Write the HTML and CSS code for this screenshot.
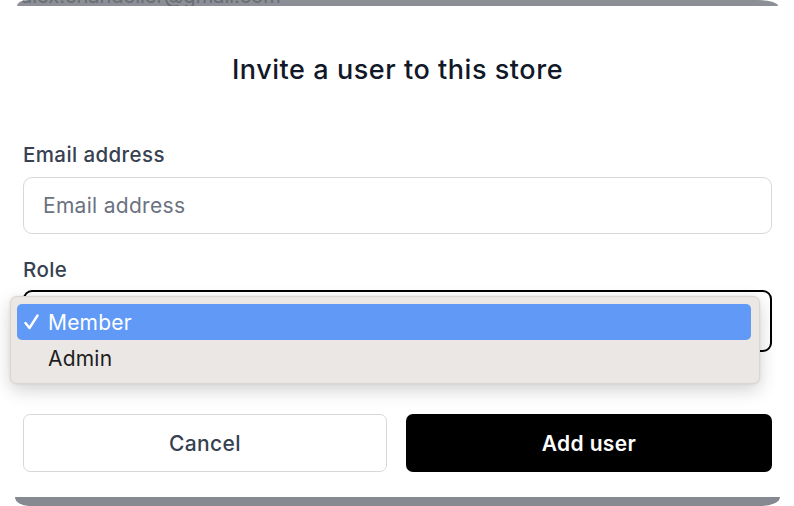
FILE: index.html
```html
<!DOCTYPE html>
<html lang="en">
<head>
<meta charset="utf-8">
<title>Invite a user</title>
<link rel="stylesheet" href="styles.css">
</head>
<body>
  <div class="page-top"><span class="page-email">alex.chandelier@gmail.com</span></div>
  <div class="modal">
    <h1 class="modal-title">Invite a user to this store</h1>
    <div class="field">
      <label class="field-label">Email address</label>
      <div class="input">Email address</div>
    </div>
    <div class="field field-role">
      <label class="field-label">Role</label>
      <div class="select-wrap">
        <div class="select"></div>
        <div class="popup">
          <div class="option option-selected"><span class="check"><svg width="15" height="16" viewBox="0 0 15 16"><polyline points="1.5,9 5.5,14 13.5,1.5" fill="none" stroke="#ffffff" stroke-width="2.4" stroke-linecap="round" stroke-linejoin="round"/></svg></span><span class="option-text">Member</span></div>
          <div class="option"><span class="check"></span><span class="option-text">Admin</span></div>
        </div>
      </div>
    </div>
    <div class="actions">
      <div class="btn btn-cancel">Cancel</div>
      <div class="btn btn-primary">Add user</div>
    </div>
  </div>
  <div class="page-bottom"></div>
</body>
</html>
```
FILE: styles.css
```css
* { box-sizing: border-box; }
html, body { margin: 0; padding: 0; }
body {
  width: 794px;
  height: 506px;
  overflow: hidden;
  background: #ffffff;
  font-family: Inter, "Noto Sans", sans-serif;
}
.page-top {
  height: 6px;
  margin: 0 16px 0 17px;
  background: #8c8f96;
  border-top-left-radius: 12px 7px;
  border-top-right-radius: 24px 7px;
  overflow: hidden;
  position: relative;
}
.page-email {
  display: block;
  padding-left: 4px;
  margin-top: -14px;
  font-size: 20px;
  line-height: 20px;
  color: #696c73;
  white-space: nowrap;
}
.modal {
  height: 491px;
  padding: 48px 22px 0 23px;
  background: #ffffff;
  display: flex;
  flex-direction: column;
}
.modal-title {
  margin: 0;
  text-align: center;
  font-size: 27px;
  letter-spacing: 0.55px;
  line-height: 32px;
  font-weight: 500;
  color: #111827;
}
.field {
  display: flex;
  flex-direction: column;
}
.field:first-of-type { margin-top: 55px; }
.field-label {
  font-size: 20.5px;
  letter-spacing: 0.4px;
  line-height: 28px;
  font-weight: 500;
  color: #374151;
}
.input {
  margin-top: 8px;
  height: 57px;
  border: 1px solid #d6d8dc;
  border-radius: 9px;
  padding: 0 19px;
  display: flex;
  align-items: center;
  font-size: 21px;
  letter-spacing: 0.3px;
  color: #6b7280;
}
.field-role { margin-top: 22px; }
.select-wrap {
  position: relative;
  margin-top: 6px;
}
.select {
  height: 62px;
  border: 2.5px solid #000000;
  border-radius: 9px;
  background: #ffffff;
}
.popup {
  position: absolute;
  left: -13px;
  top: 6px;
  width: 750px;
  height: 88px;
  background: #ebe7e4;
  border-radius: 7px;
  border: 1px solid rgba(0, 0, 0, 0.07);
  box-shadow: 0 6px 18px rgba(0, 0, 0, 0.18), 0 0 3px rgba(0, 0, 0, 0.08);
  padding: 7px 8px 0 6px;
  display: flex;
  flex-direction: column;
}
.option {
  height: 36px;
  display: flex;
  align-items: center;
  border-radius: 5px;
  font-size: 21px;
  color: #1e1e1e;
}
.option-selected {
  background: #6199f7;
  color: #ffffff;
}
.check {
  width: 31px;
  padding-left: 7px;
  display: flex;
  align-items: center;
}
.option-text { font-weight: 400; letter-spacing: 0.2px; }
.actions {
  margin-top: 62px;
  display: grid;
  grid-template-columns: 364px 366px;
  column-gap: 19px;
}
.btn {
  height: 58px;
  border-radius: 7px;
  display: flex;
  align-items: center;
  justify-content: center;
  font-size: 21px;
  letter-spacing: 0.35px;
}
.btn-cancel {
  border: 1px solid #d6d8dc;
  color: #374151;
  font-weight: 500;
  background: #ffffff;
}
.btn-primary {
  background: #000000;
  color: #ffffff;
  font-weight: 600;
}
.page-bottom {
  height: 9px;
  margin: 0 14px 0 15px;
  background: #868990;
  border-bottom-left-radius: 14px 9px;
  border-bottom-right-radius: 18px 9px;
}
```
